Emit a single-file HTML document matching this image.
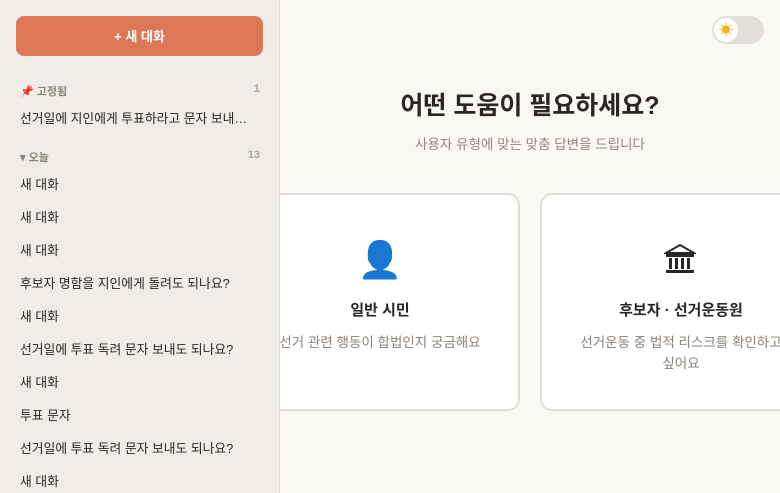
<!DOCTYPE html>
<html><head><meta charset="utf-8"><style>
*{margin:0;padding:0;box-sizing:border-box}
body{width:780px;height:493px;overflow:hidden;font-family:"Liberation Sans","Noto Sans CJK KR",sans-serif;background:#faf8f5;position:relative}
.side{position:absolute;left:0;top:0;width:280px;height:493px;background:#f0ece7;border-right:1px solid #e0dbd4;z-index:5}
.btn{position:absolute;left:16px;top:16px;width:247px;height:40px;background:#dc7856;border-radius:8px;color:#fff;font-size:13px;font-weight:bold;text-align:center;line-height:41px}
.sec{position:absolute;left:20px;width:240px;font-size:11px;color:#8a837b;font-weight:bold}
.sec span{float:right;color:#aaa39a}
.it{position:absolute;left:20px;font-size:12.8px;color:#2a2623;white-space:nowrap}
.card{position:absolute;top:193px;height:218px;background:#fff;border:2px solid #e0dcd6;border-radius:12px}
.card .t{position:absolute;top:104px;left:0;width:100%;text-align:center;font-size:15px;font-weight:bold;color:#2a2623}
.card .d{position:absolute;top:137px;left:0;width:100%;text-align:center;font-size:13.5px;color:#8a837b;line-height:21px}
.tog{position:absolute;left:712px;top:16px;width:52px;height:28px;border-radius:14px;background:#e2dfdb}
.tog div{position:absolute;left:2px;top:2px;width:24px;height:24px;border-radius:12px;background:#fff;text-align:center;line-height:24px;font-size:14px;color:#f5b01a}
</style></head><body>
<div class="side">
<div class="btn">+ 새 대화</div>
<div class="sec" style="top:83px">📌 고정됨<span>1</span></div>
<div class="it" style="top:108px">선거일에 지인에게 투표하라고 문자 보내…</div>
<div class="sec" style="top:149px">▾ 오늘<span>13</span></div>
<div class="it" style="top:174px">새 대화</div>
<div class="it" style="top:207px">새 대화</div>
<div class="it" style="top:240px">새 대화</div>
<div class="it" style="top:273px">후보자 명함을 지인에게 돌려도 되나요?</div>
<div class="it" style="top:306px">새 대화</div>
<div class="it" style="top:339px">선거일에 투표 독려 문자 보내도 되나요?</div>
<div class="it" style="top:372px">새 대화</div>
<div class="it" style="top:405px">투표 문자</div>
<div class="it" style="top:438px">선거일에 투표 독려 문자 보내도 되나요?</div>
<div class="it" style="top:471px">새 대화</div>
</div>
<div class="tog"><div>☀</div></div>
<div style="position:absolute;left:280px;top:86px;width:500px;text-align:center;font-size:25px;font-weight:bold;color:#2a2623">어떤 도움이 필요하세요?</div>
<div style="position:absolute;left:280px;top:133px;width:500px;text-align:center;font-size:13.5px;color:#8f8880">사용자 유형에 맞는 맞춤 답변을 드립니다</div>
<div class="card" style="left:240px;width:280px">
<div style="position:absolute;top:44px;left:0;width:100%;text-align:center;font-size:36px;color:#3a6fb0">👤</div>
<div class="t">일반 시민</div>
<div class="d">선거 관련 행동이 합법인지 궁금해요</div></div>
<div class="card" style="left:540px;width:282px">
<svg style="position:absolute;left:122px;top:48px" width="32" height="32" viewBox="0 0 32 32" fill="#2a2623"><path d="M16 2 L30 10 H2 Z" fill="none" stroke="#2a2623" stroke-width="2"/><rect x="2" y="11" width="28" height="3"/><rect x="5" y="15" width="3" height="11"/><rect x="11" y="15" width="3" height="11"/><rect x="17" y="15" width="3" height="11"/><rect x="23" y="15" width="3" height="11"/><rect x="2" y="27" width="28" height="3"/></svg>
<div class="t">후보자 · 선거운동원</div>
<div class="d">선거운동 중 법적 리스크를 확인하고<br>싶어요</div></div>
</body></html>
